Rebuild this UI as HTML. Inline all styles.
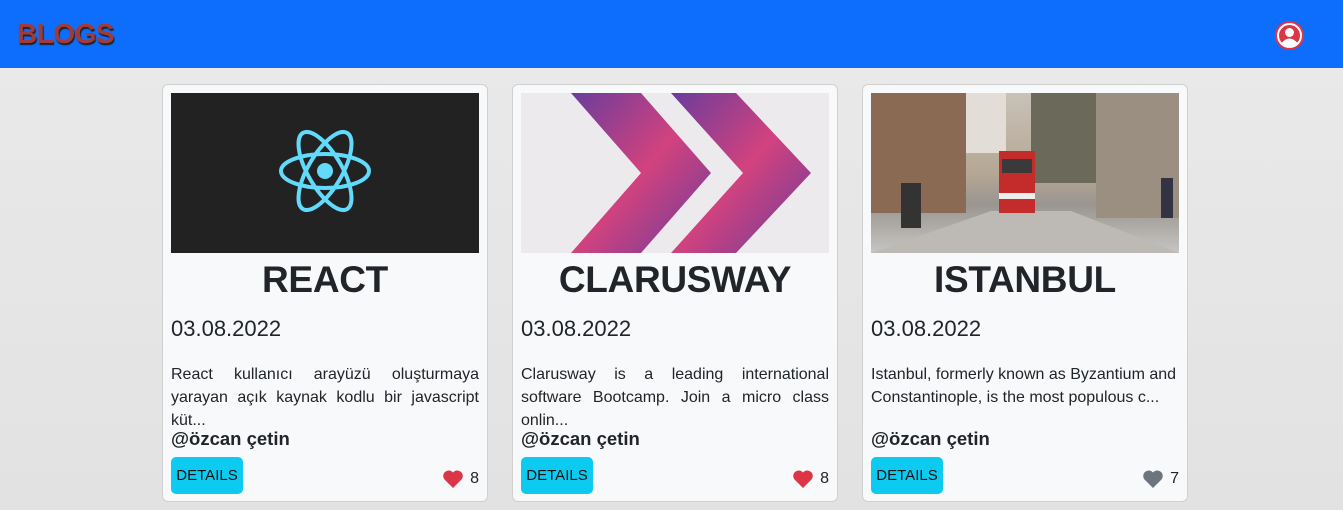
<!DOCTYPE html>
<html><head><meta charset="utf-8"><style>
*{box-sizing:border-box;margin:0;padding:0}
body{width:1343px;height:510px;overflow:hidden;font-family:"Liberation Sans","DejaVu Sans",sans-serif;background:linear-gradient(180deg,#eaeaea,#e2e2e2);}
.nav{height:68px;background:#0d6efd;position:relative}
.logo{position:absolute;left:17px;top:18px;font-size:28px;font-weight:bold;color:#a33a3a;text-shadow:1px 2px 1px #222;letter-spacing:-0.5px}
.av{position:absolute;left:1275px;top:21px;width:29px;height:29px;border-radius:50%;background:#dc3545;overflow:hidden}
.card{position:absolute;top:84px;width:326px;height:418px;background:#f8f9fa;border:1px solid #d0d0d0;border-radius:6px}
.img{position:absolute;left:8px;top:8px;width:308px;height:160px;overflow:hidden}
.t{position:absolute;top:174px;left:0;width:100%;text-align:center;font-size:37px;font-weight:bold;color:#212529;letter-spacing:-0.3px}
.d{position:absolute;top:231px;left:8px;font-size:22px;color:#212529}
.p{position:absolute;top:278px;left:8px;width:308px;font-size:16px;line-height:23px;color:#212529;text-align:justify}
.a{position:absolute;top:343px;left:8px;font-size:18.5px;font-weight:bold;color:#212529}
.b{position:absolute;top:372px;left:8px;width:72px;height:37px;background:#0dcaf0;border-radius:5px;font-size:15px;line-height:37px;text-align:center;color:#111}
.l{position:absolute;top:384px;right:8px;font-size:16px;color:#212529;display:flex;align-items:center;gap:6px}
</style></head><body>
<div class="nav"><div class="logo">BLOGS</div>
<div class="av"><svg width="29" height="29" viewBox="0 0 29 29"><circle cx="14.5" cy="14.5" r="11.5" fill="none" stroke="#fff" stroke-width="2"/><circle cx="14.5" cy="11.5" r="4.5" fill="#fff"/><path d="M6.5 22 Q14.5 13 22.5 22 Q14.5 28 6.5 22Z" fill="#fff"/></svg></div></div>

<div class="card" style="left:162px">
<div class="img" style="background:#222"><svg width="308" height="160" viewBox="0 0 308 160"><g fill="none" stroke="#61dafb" stroke-width="4"><ellipse cx="154" cy="78" rx="44" ry="17"/><ellipse cx="154" cy="78" rx="44" ry="17" transform="rotate(60 154 78)"/><ellipse cx="154" cy="78" rx="44" ry="17" transform="rotate(120 154 78)"/></g><circle cx="154" cy="78" r="8" fill="#61dafb"/></svg></div>
<div class="t">REACT</div><div class="d">03.08.2022</div>
<div class="p">React kullanıcı arayüzü oluşturmaya yarayan açık kaynak kodlu bir javascript küt...</div>
<div class="a">@özcan çetin</div><div class="b">DETAILS</div>
<div class="l"><svg width="22" height="20" viewBox="0 0 22 20"><path d="M11 19 L2.5 10.5 A5.5 5.5 0 0 1 11 3.5 A5.5 5.5 0 0 1 19.5 10.5Z" fill="#dc3545"/></svg>8</div></div>

<div class="card" style="left:512px">
<div class="img" style="background:#eceaec"><svg width="308" height="160" viewBox="0 0 308 160"><defs><linearGradient id="g" x1="0" y1="0" x2="1" y2="1"><stop offset="0" stop-color="#6a3c9c"/><stop offset=".5" stop-color="#d2427e"/><stop offset="1" stop-color="#6a3c9c"/></linearGradient></defs><polygon points="50,0 120,0 190,80 120,160 50,160 120,80" fill="url(#g)"/><polygon points="150,0 215,0 290,80 215,160 150,160 222,80" fill="url(#g)"/></svg></div>
<div class="t">CLARUSWAY</div><div class="d">03.08.2022</div>
<div class="p">Clarusway is a leading international software Bootcamp. Join a micro class onlin...</div>
<div class="a">@özcan çetin</div><div class="b">DETAILS</div>
<div class="l"><svg width="22" height="20" viewBox="0 0 22 20"><path d="M11 19 L2.5 10.5 A5.5 5.5 0 0 1 11 3.5 A5.5 5.5 0 0 1 19.5 10.5Z" fill="#dc3545"/></svg>8</div></div>

<div class="card" style="left:862px">
<div class="img" style="background:linear-gradient(180deg,#c9c2b8 0%,#b5a794 50%,#9a9590 70%,#c7c5c3 100%)"><svg width="308" height="160" viewBox="0 0 308 160"><rect x="0" y="0" width="95" height="120" fill="#8a6a52"/><rect x="225" y="0" width="83" height="125" fill="#9a8f80"/><rect x="95" y="0" width="40" height="60" fill="#e2ddd6"/><rect x="160" y="0" width="65" height="90" fill="#6b6a5a"/><polygon points="0,160 120,118 200,118 308,160" fill="#bdbab6"/><rect x="128" y="58" width="36" height="62" fill="#c42b2b"/><rect x="131" y="66" width="30" height="14" fill="#3a3a3a"/><rect x="128" y="100" width="36" height="6" fill="#eee"/><rect x="30" y="90" width="20" height="45" fill="#333"/><rect x="290" y="85" width="12" height="40" fill="#334"/></svg></div>
<div class="t">ISTANBUL</div><div class="d">03.08.2022</div>
<div class="p" style="text-align:left">Istanbul, formerly known as Byzantium and Constantinople, is the most populous c...</div>
<div class="a">@özcan çetin</div><div class="b">DETAILS</div>
<div class="l"><svg width="22" height="20" viewBox="0 0 22 20"><path d="M11 19 L2.5 10.5 A5.5 5.5 0 0 1 11 3.5 A5.5 5.5 0 0 1 19.5 10.5Z" fill="#6c757d"/></svg>7</div></div>
</body></html>
